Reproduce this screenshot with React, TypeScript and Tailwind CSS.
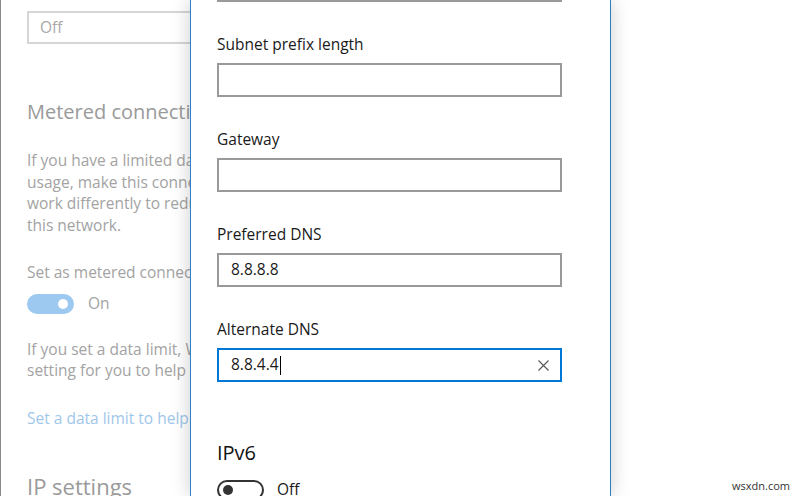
import React from "react";

const font = { fontFamily: '"Open Sans", "Noto Sans", sans-serif' };

function Field({ label, value, focused }: { label: string; value?: string; focused?: boolean }) {
  return (
    <div className="flex shrink-0 flex-col">
      <div className="text-[15.5px] leading-[20px] text-[#1a1a1a]">{label}</div>
      <div
        className={
          "mt-[9px] flex h-[34px] w-[345px] items-center border-2 pl-[12px] pr-[11px] text-[15.5px] text-[#1a1a1a] " +
          (focused ? "border-[#0078d7]" : "border-[#999999]")
        }
      >
        <span>{value}</span>
        {focused && <span className="ml-[1px] h-[19px] w-[1px] bg-black" />}
        {focused && (
          <svg className="ml-auto" width="11" height="11" viewBox="0 0 11 11">
            <path d="M0.5 0.5 L10.5 10.5 M10.5 0.5 L0.5 10.5" stroke="#555" strokeWidth="1.1" fill="none" />
          </svg>
        )}
      </div>
    </div>
  );
}

export default function App() {
  return (
    <div style={font} className="relative h-[496px] w-[800px] overflow-hidden bg-white">
      {/* Settings page behind the dialog */}
      <div className="flex h-full flex-col overflow-hidden whitespace-nowrap border-l border-[#8a8a8a] pl-[26px] pt-[11px] text-[#a3a3a3] [&>*]:shrink-0">
        <div className="flex h-[33px] w-[300px] items-center border-2 border-[#d6d6d6] pl-[11px] text-[15.5px] text-[#a8a8a8]">
          Off
        </div>
        <div className="mt-[54px] text-[20px] leading-[28px] text-[#9a9a9a]">Metered connection</div>
        <div className="mt-[24px] text-[15.5px] leading-[21.5px]">
          <div>If you have a limited data plan</div>
          <div>usage, make this connection</div>
          <div>work differently to reduce</div>
          <div>this network.</div>
        </div>
        <div className="mt-[26px] text-[15.5px] leading-[21px]">Set as metered connection</div>
        <div className="mt-[9px] flex items-center">
          <div className="flex h-[20px] w-[47px] items-center justify-end rounded-full bg-[#9dc9f0] pr-[6px]">
            <div className="h-[10px] w-[10px] rounded-full bg-white" />
          </div>
          <span className="ml-[14px] text-[15.5px]">On</span>
        </div>
        <div className="mt-[24px] text-[15.5px] leading-[21px]">
          <div>If you set a data limit, Windows</div>
          <div>setting for you to help</div>
        </div>
        <div className="mt-[27px] text-[15.5px] leading-[21px] text-[#9fc6ea]">Set a data limit to help</div>
        <div className="mt-[42px] text-[22px] leading-[30px] text-[#9a9a9a]">IP settings</div>
      </div>

      {/* Edit IP settings dialog */}
      <div className="absolute left-[190px] top-0 flex h-full w-[421px] flex-col overflow-hidden border-x border-[#2f7fc9] bg-white pl-[26px] shadow-[0_0_18px_rgba(0,0,0,0.2)] [&>*]:shrink-0">
        <div className="-mt-[32px] h-[34px] w-[345px] border-2 border-[#999999]" />
        <div className="mt-[32px] flex flex-col gap-[32px]">
          <Field label="Subnet prefix length" />
          <Field label="Gateway" />
          <Field label="Preferred DNS" value="8.8.8.8" />
          <Field label="Alternate DNS" value="8.8.4.4" focused />
        </div>
        <div className="mt-[57px] text-[20px] leading-[28px] text-[#111]">IPv6</div>
        <div className="mt-[11px] flex items-center">
          <div className="flex h-[20px] w-[47px] items-center rounded-full border-2 border-[#333] pl-[4px]">
            <div className="h-[10px] w-[10px] rounded-full bg-[#333]" />
          </div>
          <span className="ml-[13px] text-[15.5px] text-[#1a1a1a]">Off</span>
        </div>
      </div>

      <div className="absolute bottom-[2px] right-[10px] text-[11px] text-[#333]">wsxdn.com</div>
    </div>
  );
}
